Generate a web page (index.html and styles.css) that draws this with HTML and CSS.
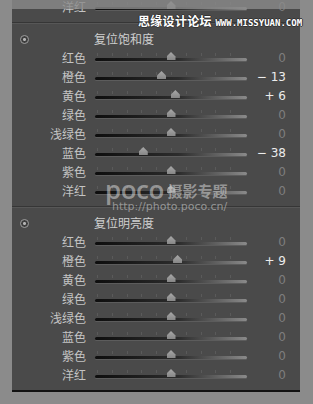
FILE: index.html
```html
<!DOCTYPE html>
<html lang="zh">
<head>
    <meta charset="UTF-8">
    <title>HSL 面板</title>
    <link rel="stylesheet" href="styles.css">
</head>
<body>
    <div class="panel">
        <!-- 上一组的最后一行，被截掉一半 -->
        <div class="section">
            <div class="row">
                <span class="label">洋红</span>
                <div class="slider"><span class="thumb" style="left: 50%"></span></div>
                <span class="value">0</span>
            </div>
        </div>

        <div class="sep"></div>
        <div class="section">
            <div class="head"><span class="reset-icon"></span><span class="title">复位饱和度</span></div>
            <div class="row"><span class="label">红色</span><div class="slider"><span class="thumb" style="left: 50%"></span></div><span class="value">0</span></div>
            <div class="row"><span class="label">橙色</span><div class="slider"><span class="thumb" style="left: 43.76%"></span></div><span class="value on">− 13</span></div>
            <div class="row"><span class="label">黄色</span><div class="slider"><span class="thumb" style="left: 52.88%"></span></div><span class="value on">+ 6</span></div>
            <div class="row"><span class="label">绿色</span><div class="slider"><span class="thumb" style="left: 50%"></span></div><span class="value">0</span></div>
            <div class="row"><span class="label">浅绿色</span><div class="slider"><span class="thumb" style="left: 50%"></span></div><span class="value">0</span></div>
            <div class="row"><span class="label">蓝色</span><div class="slider"><span class="thumb" style="left: 31.76%"></span></div><span class="value on">− 38</span></div>
            <div class="row"><span class="label">紫色</span><div class="slider"><span class="thumb" style="left: 50%"></span></div><span class="value">0</span></div>
            <div class="row"><span class="label">洋红</span><div class="slider"><span class="thumb" style="left: 50%"></span></div><span class="value">0</span></div>
        </div>

        <div class="sep"></div>
        <div class="section">
            <div class="head"><span class="reset-icon"></span><span class="title">复位明亮度</span></div>
            <div class="row"><span class="label">红色</span><div class="slider"><span class="thumb" style="left: 50%"></span></div><span class="value">0</span></div>
            <div class="row"><span class="label">橙色</span><div class="slider"><span class="thumb" style="left: 54.32%"></span></div><span class="value on">+ 9</span></div>
            <div class="row"><span class="label">黄色</span><div class="slider"><span class="thumb" style="left: 50%"></span></div><span class="value">0</span></div>
            <div class="row"><span class="label">绿色</span><div class="slider"><span class="thumb" style="left: 50%"></span></div><span class="value">0</span></div>
            <div class="row"><span class="label">浅绿色</span><div class="slider"><span class="thumb" style="left: 50%"></span></div><span class="value">0</span></div>
            <div class="row"><span class="label">蓝色</span><div class="slider"><span class="thumb" style="left: 50%"></span></div><span class="value">0</span></div>
            <div class="row"><span class="label">紫色</span><div class="slider"><span class="thumb" style="left: 50%"></span></div><span class="value">0</span></div>
            <div class="row"><span class="label">洋红</span><div class="slider"><span class="thumb" style="left: 50%"></span></div><span class="value">0</span></div>
        </div>
    </div>

    <!-- 截图上的遮罩和水印 -->
    <div class="top-strip"></div>
    <div class="mark-top"><span class="mark-cn">思缘设计论坛</span> <span class="mark-en">WWW.MISSYUAN.COM</span></div>
    <div class="mark-poco">
        <div class="poco-line"><span class="poco">poco</span> <span class="poco-cn">摄影专题</span></div>
        <div class="poco-url">http://photo.poco.cn/</div>
    </div>
</body>
</html>
```

FILE: styles.css
```css
/* 面板样式 */
body {
    margin: 0;
    width: 313px;
    height: 404px;
    overflow: hidden;
    position: relative;
    background-color: #8b8b8b;
    font-family: "Noto Sans CJK SC", sans-serif;
}

.panel {
    margin: -3px 13px 0 12px;
    background-color: #4a4a4a;
    border-bottom: 2px solid #121212;
}

.section {
    padding-bottom: 6px;
}

.sep {
    height: 0;
    border-top: 1px solid #363636;
    border-bottom: 1px solid #575757;
}

.head {
    display: flex;
    align-items: center;
    height: 24px;
    box-sizing: border-box;
    padding: 8px 0 2px 8px;
}

.reset-icon {
    width: 9px;
    height: 9px;
    box-sizing: border-box;
    border-radius: 50%;
    border: 1.5px solid #9c9c9c;
    background: radial-gradient(circle, #b5b5b5 0 1.3px, #3e3e3e 1.6px);
}

.title {
    margin-left: 65px;
    font-size: 12px;
    line-height: 14px;
    color: #cfcfcf;
}

.row {
    display: grid;
    grid-template-columns: 74px 152px 30px;
    column-gap: 9px;
    height: 19px;
    align-items: center;
}

.label {
    text-align: right;
    font-size: 12px;
    color: #c4c4c4;
}

.slider {
    position: relative;
    height: 3px;
    margin-top: 4px;
    border-radius: 2px;
    background: linear-gradient(to right, #0e0e0e, #2c2c2c 55%, #8a8a8a);
    box-shadow: 0 1px 0 #5c5c5c;
}

/* 刻度线 */
.slider::before {
    content: "";
    position: absolute;
    left: 2px;
    right: 2px;
    top: -5px;
    height: 3px;
    background: repeating-linear-gradient(to right, rgba(255, 255, 255, 0.09) 0 1px, transparent 1px 14.8px);
}

.thumb {
    position: absolute;
    top: -6px;
    width: 9px;
    height: 8px;
    margin-left: -4.5px;
    background: linear-gradient(#a8a8a8, #878787);
    clip-path: polygon(50% 0, 100% 55%, 100% 100%, 0 100%, 0 55%);
}

.value {
    text-align: right;
    font-family: "DejaVu Sans", sans-serif;
    font-size: 12px;
    color: #7e7e7e;
}

.value.on {
    color: #ececec;
}

.top-strip {
    position: absolute;
    top: 0;
    left: 0;
    right: 0;
    height: 9px;
    background-color: rgba(139, 139, 139, 0.8);
}

.mark-top {
    position: absolute;
    top: 7px;
    left: 138px;
    white-space: nowrap;
    color: #fff;
    text-shadow: 1px 0 0 #333, -1px 0 0 #333, 0 1px 0 #333, 0 -1px 0 #333;
}

.mark-cn {
    font-size: 12px;
    font-weight: bold;
    letter-spacing: 0.3px;
}

.mark-en {
    font-family: "DejaVu Sans Mono", monospace;
    font-size: 9px;
    font-weight: bold;
    letter-spacing: 0;
}

.mark-poco {
    position: absolute;
    top: 177px;
    left: 105px;
    color: rgba(215, 215, 215, 0.55);
    white-space: nowrap;
}

.poco-line {
    height: 24px;
    line-height: 24px;
}

.poco {
    font-family: "Open Sans", sans-serif;
    font-size: 26px;
    font-weight: 600;
    letter-spacing: -0.5px;
}

.poco-cn {
    font-size: 15px;
    font-weight: bold;
    vertical-align: 2px;
}

.poco-url {
    margin-left: 7px;
    font-family: "DejaVu Sans", sans-serif;
    font-size: 11px;
    line-height: 11px;
}
```
